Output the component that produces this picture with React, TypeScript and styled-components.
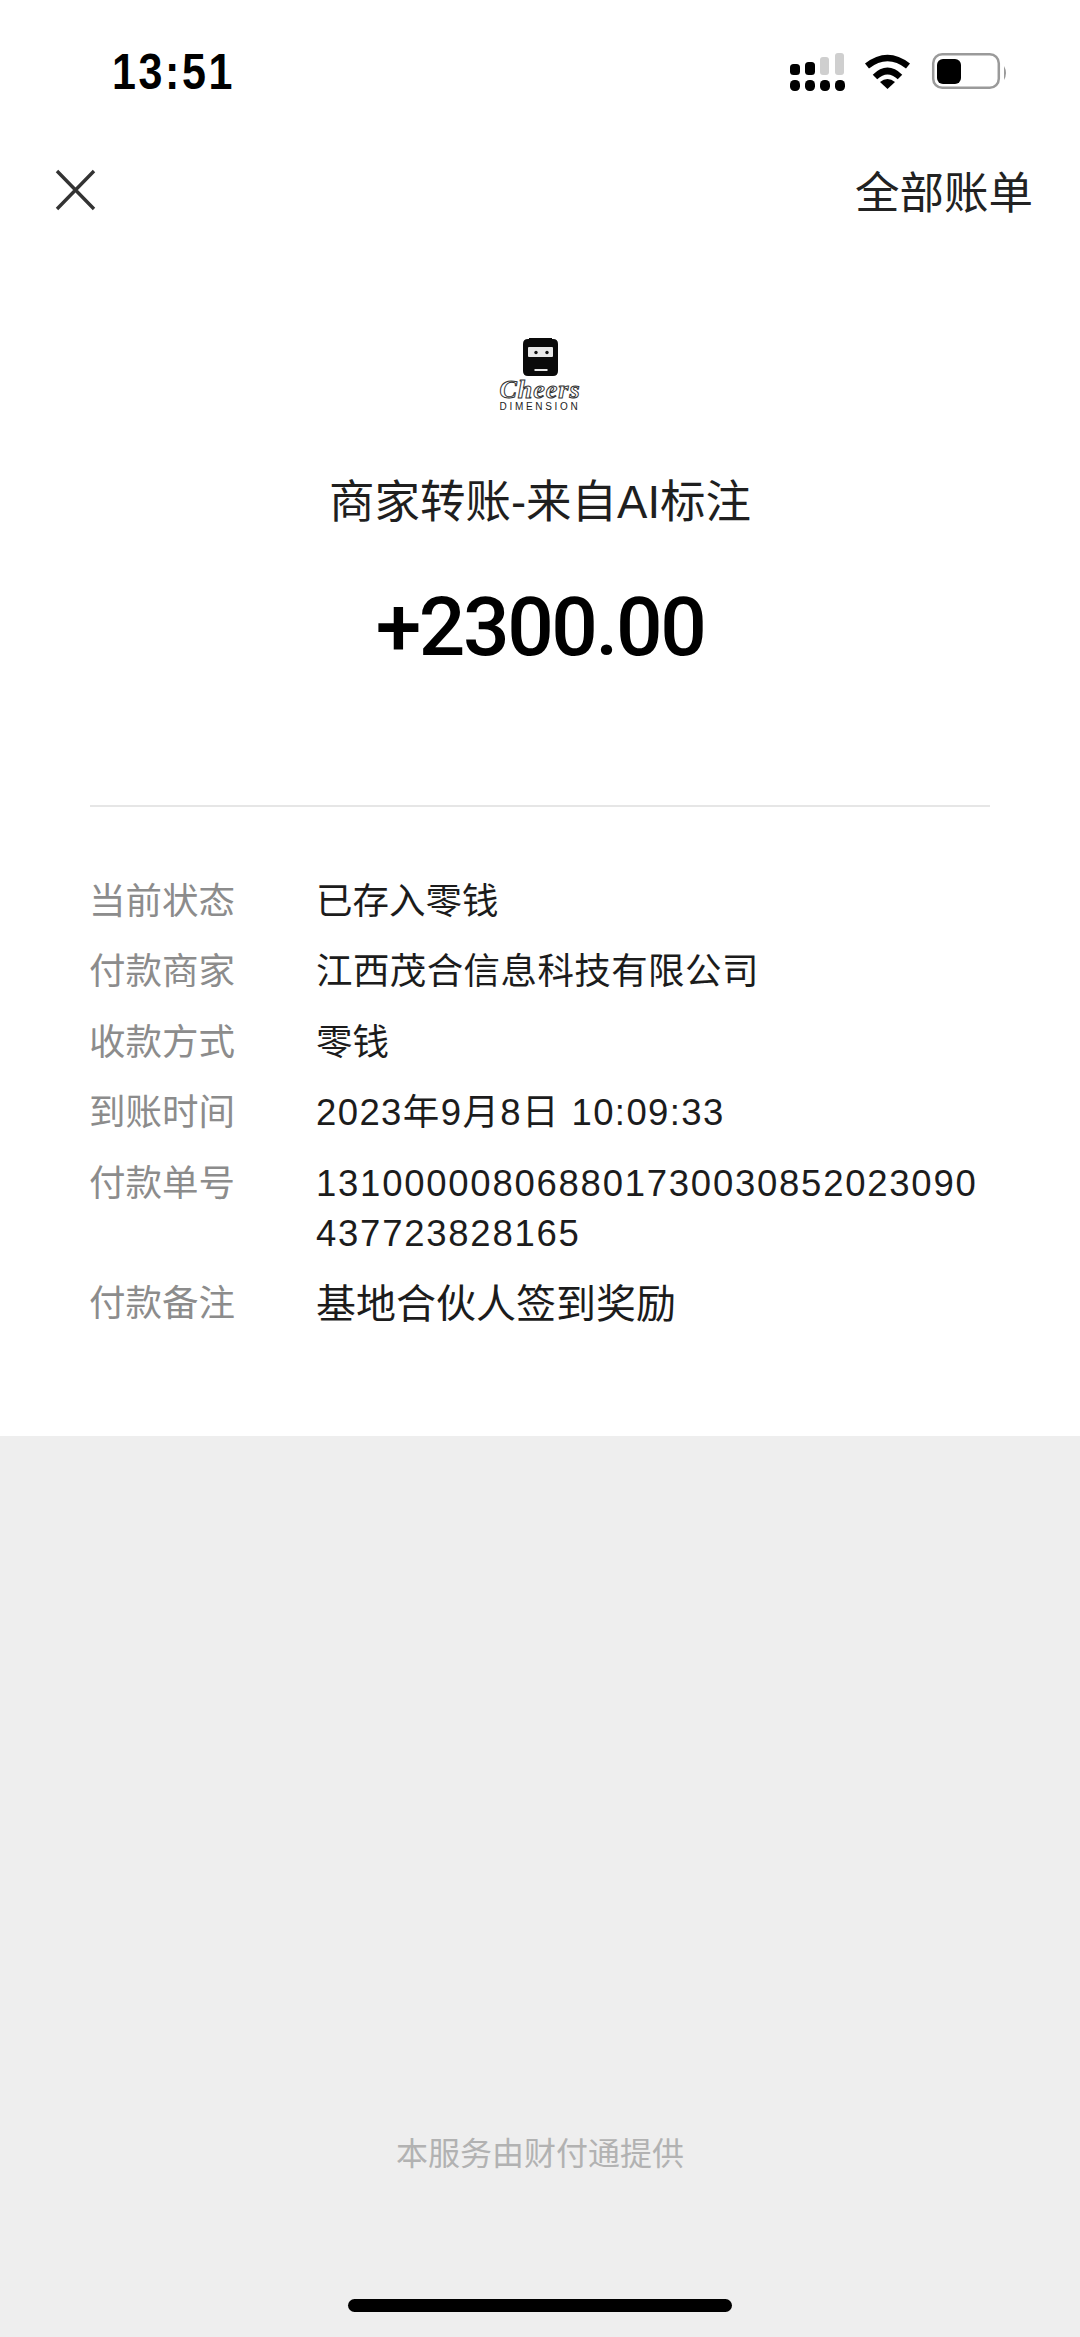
import React from 'react';
import styled, {createGlobalStyle} from 'styled-components';

const GlobalStyle = createGlobalStyle`
  html, body {
    margin: 0;
    padding: 0;
    background: #eeeeee;
  }
  * {
    box-sizing: border-box;
  }
`

const Page = styled.div`
  width: 1080px;
  height: 2337px;
  display: flex;
  flex-direction: column;
  background: #eeeeee;
  font-family: "Noto Sans CJK SC", "Liberation Sans", sans-serif;
  overflow: hidden;
`

const Sheet = styled.div`
  height: 1436px;
  background: #ffffff;
  display: flex;
  flex-direction: column;
`

const StatusBar = styled.div`
  height: 143px;
  padding: 45px 70px 0 112px;
  display: flex;
  justify-content: space-between;
  align-items: flex-start;
`

const Clock = styled.div`
  font-family: "Liberation Sans", sans-serif;
  font-size: 50px;
  line-height: 54px;
  font-weight: 700;
  letter-spacing: 3px;
  color: #000000;
  transform: scaleX(0.86);
  transform-origin: left;
`

const StatusIcons = styled.svg`
  width: 220px;
  height: 40px;
  margin-top: 7px;
`

const NavBar = styled.div`
  height: 94px;
  padding: 0 47px 0 52px;
  display: flex;
  justify-content: space-between;
  align-items: center;
`

const CloseIcon = styled.svg`
  width: 46px;
  height: 46px;
  stroke: #333333;
  stroke-width: 3.4px;
  fill: none;
`

const NavLink = styled.div`
  font-size: 44.5px;
  line-height: 60px;
  color: #222222;
`

const Hero = styled.div`
  display: flex;
  flex-direction: column;
  align-items: center;
  padding-top: 101px;
`

const LogoMark = styled.svg`
  width: 35px;
  height: 38px;
  display: block;
`

const LogoWord = styled.div`
  font-family: "Liberation Serif", serif;
  font-style: italic;
  font-weight: 700;
  font-size: 26px;
  line-height: 22px;
  margin-top: 3px;
  letter-spacing: 1px;
  color: #ffffff;
  -webkit-text-stroke: 1px #333333;
`

const LogoSub = styled.div`
  font-family: "Liberation Sans", sans-serif;
  font-size: 10px;
  line-height: 12px;
  letter-spacing: 2.7px;
  color: #222222;
`

const Title = styled.div`
  margin-top: 60px;
  font-family: "Liberation Sans", "Noto Sans CJK SC", sans-serif;
  font-size: 45.5px;
  line-height: 60px;
  color: #1f1f1f;
`

const Amount = styled.div`
  margin-top: 49px;
  font-family: "Roboto", "Liberation Sans", sans-serif;
  font-size: 82px;
  line-height: 90px;
  font-weight: 500;
  letter-spacing: -2.4px;
  color: #000000;
`

const Divider = styled.div`
  margin: 133px 90px 0 90px;
  height: 1.5px;
  background: #e6e6e6;
`

const Details = styled.div`
  margin-top: 67px;
  padding: 0 90px 0 89px;
  display: flex;
  flex-direction: column;
  gap: 20.6px;
`

const Row = styled.div`
  display: grid;
  grid-template-columns: 227px 1fr;
  line-height: 50px;
`

const Label = styled.div`
  color: #8c8c8c;
  font-size: 36.5px;
`

const Value = styled.div<{$size: number; $tracking: number}>`
  margin: 3px 0 -3px;
  font-family: "Liberation Sans", "Noto Sans CJK SC", sans-serif;
  color: #1c1c1c;
  font-size: ${props => props.$size}px;
  letter-spacing: ${props => props.$tracking}px;
  word-break: break-all;
`

const Footer = styled.div`
  flex: 1;
  display: flex;
  flex-direction: column;
  align-items: center;
  justify-content: flex-end;
`

const Provider = styled.div`
  font-size: 32px;
  line-height: 44px;
  color: #b2b2b2;
`

const HomeBar = styled.div`
  width: 384px;
  height: 13px;
  margin: 126px 0 25px;
  border-radius: 7px;
  background: #000000;
`

const rows = [
  {label: '当前状态', value: '已存入零钱', size: 36.5, tracking: 0},
  {label: '付款商家', value: '江西茂合信息科技有限公司', size: 36.5, tracking: 0.4},
  {label: '收款方式', value: '零钱', size: 36.5, tracking: 0},
  {label: '到账时间', value: '2023年9月8日 10:09:33', size: 36.5, tracking: 1.4},
  {label: '付款单号', value: '131000008068801730030852023090437723828165', size: 36.5, tracking: 1.75},
  {label: '付款备注', value: '基地合伙人签到奖励', size: 40, tracking: 0},
]

const App = () => {
  return (
    <Page>
      <GlobalStyle />
      <Sheet>
        <StatusBar>
          <Clock>13:51</Clock>
          <StatusIcons viewBox="0 0 220 40">
            {/* signal dots */}
            {[0, 15, 30, 45].map(x => (
              <rect key={x} x={x} y={28} width={10} height={11} rx={4.5} fill="#000" />
            ))}
            <rect x={0} y={12} width={10} height={11} rx={3.5} fill="#000" />
            <rect x={15} y={10} width={10} height={13} rx={3.5} fill="#000" />
            <rect x={30} y={5} width={9} height={18} rx={3} fill="#cfcfcf" />
            <rect x={45} y={1} width={9} height={22} rx={3} fill="#cfcfcf" />
            {/* wifi */}
            <path d="M77 14 Q97.5 -2 118 14" stroke="#000" strokeWidth="6.5" fill="none" />
            <path d="M85 25 Q97.5 13 110 25" stroke="#000" strokeWidth="6.5" fill="none" />
            <path d="M90 30 Q97.5 24 105 30 L97.5 37 Z" fill="#000" />
            {/* battery */}
            <rect x={143.2} y={2.2} width={65.6} height={33.6} rx={9} stroke="#9a9a9a" strokeWidth="2.5" fill="#fff" />
            <rect x={147} y={7} width={24} height={25} rx={6} fill="#000" />
            <path d="M214 14 Q218 21 214 28 Z" fill="#9a9a9a" />
          </StatusIcons>
        </StatusBar>
        <NavBar>
          <CloseIcon viewBox="0 0 46 46">
            <path d="M5 4 L42 42 M42 4 L5 42" />
          </CloseIcon>
          <NavLink>全部账单</NavLink>
        </NavBar>
        <Hero>
          <LogoMark viewBox="0 0 35 38">
            <path d="M5 1 H6 V0 H29 V1 H30 Q35 1 35 6 V33 Q35 38 30 38 H5 Q0 38 0 33 V6 Q0 1 5 1 Z" fill="#0a0a0a" />
            <rect x={5} y={9} width={25} height={10} rx={1} fill="#e8e8e8" />
            <circle cx={13} cy={14.5} r={1.7} fill="#111" />
            <circle cx={24} cy={14.5} r={1.7} fill="#111" />
            <rect x={11.5} y={31} width={13} height={2} fill="#e8e8e8" />
          </LogoMark>
          <LogoWord>Cheers</LogoWord>
          <LogoSub>DIMENSION</LogoSub>
          <Title>商家转账-来自AI标注</Title>
          <Amount>+2300.00</Amount>
        </Hero>
        <Divider />
        <Details>
          {rows.map(row => (
            <Row key={row.label}>
              <Label>{row.label}</Label>
              <Value $size={row.size} $tracking={row.tracking}>{row.value}</Value>
            </Row>
          ))}
        </Details>
      </Sheet>
      <Footer>
        <Provider>本服务由财付通提供</Provider>
        <HomeBar />
      </Footer>
    </Page>
  )
}

export default App
